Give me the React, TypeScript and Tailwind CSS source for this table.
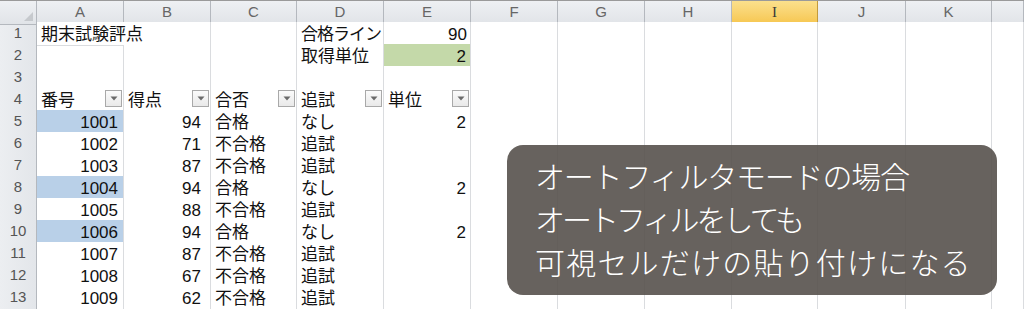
import React from "react";

type Cell = {
  text?: string;
  num?: boolean;
  filter?: boolean;
  bg?: string;
  pr?: string;
  spill?: boolean;
  extra?: string;
};

const columns = ["A", "B", "C", "D", "E", "F", "G", "H", "I", "J", "K", ""];

const fail = (id: string, score: string): Cell[] => [
  { text: id, num: true, pr: "pr-[5px]" },
  { text: score, num: true, pr: "pr-[9px]" },
  { text: "不合格" },
  { text: "追試" },
  {},
];

const pass = (id: string, score: string): Cell[] => [
  { text: id, num: true, pr: "pr-[5px]", bg: "bg-[#b9d0e8]" },
  { text: score, num: true, pr: "pr-[9px]" },
  { text: "合格" },
  { text: "なし" },
  { text: "2", num: true, pr: "pr-[4px]" },
];

const rows: Cell[][] = [
  [
    { text: "期末試験評点", spill: true },
    {},
    {},
    { text: "合格ライン", extra: "tracking-[-1px]" },
    { text: "90", num: true, pr: "pr-[3px]" },
  ],
  [{}, {}, {}, { text: "取得単位" }, { text: "2", num: true, pr: "pr-[4px]", bg: "bg-[#c4d9a9]" }],
  [],
  [
    { text: "番号", filter: true },
    { text: "得点", filter: true },
    { text: "合否", filter: true },
    { text: "追試", filter: true },
    { text: "単位", filter: true },
  ],
  pass("1001", "94"),
  fail("1002", "71"),
  fail("1003", "87"),
  pass("1004", "94"),
  fail("1005", "88"),
  pass("1006", "94"),
  fail("1007", "87"),
  fail("1008", "67"),
  fail("1009", "62"),
];

const gridCols =
  "grid grid-cols-[37px_87px_87px_86px_87px_87px_87px_87px_87px_86px_88px_86px_1fr]";

function FilterButton() {
  return (
    <div className="absolute right-[1px] top-[2px] w-[17px] h-[17px] border border-[#a9a9a9] bg-gradient-to-b from-[#fbfbfb] to-[#e9e9e9] flex items-center justify-center">
      <svg width="8" height="5" viewBox="0 0 8 5">
        <path d="M0.5 0.5 L7.5 0.5 L4 4.5 Z" fill="#6a6a6a" />
      </svg>
    </div>
  );
}

export default function App() {
  return (
    <div
      className="relative w-[1024px] h-[309px] overflow-hidden bg-white"
      style={{ fontFamily: '"Liberation Sans", "Noto Sans CJK JP", sans-serif' }}
    >
      {/* column headers */}
      <div className={`${gridCols} h-[22px] border-t border-[#9a9a9a]`}>
        <div className="relative bg-gradient-to-b from-[#eef0f3] to-[#e1e4e8] border-r border-b border-[#b4b8be]">
          <svg className="absolute right-[3px] bottom-[3px]" width="9" height="9" viewBox="0 0 9 9">
            <path d="M9 0 L9 9 L0 9 Z" fill="#c6c9cd" />
          </svg>
        </div>
        {columns.map((c) =>
          c === "I" ? (
            <div
              key={c}
              className="bg-gradient-to-b from-[#fbe08c] to-[#f6c64e] border-r border-b border-[#c29a3c] flex items-center justify-center text-[15px] text-[#3a3a3a]"
              style={{ fontFamily: '"Liberation Serif", serif' }}
            >
              I
            </div>
          ) : (
            <div
              key={c || "L"}
              className="bg-gradient-to-b from-[#eef0f3] to-[#e1e4e8] border-r border-b border-[#b4b8be] flex items-center justify-center text-[15px] text-[#666]"
            >
              {c}
            </div>
          )
        )}
      </div>

      {/* rows */}
      {rows.map((row, r) => (
        <div key={r} className={`${gridCols} h-[22px]`}>
          <div className="bg-gradient-to-r from-[#eceef1] to-[#e3e6ea] border-r border-b border-[#b4b8be] flex items-center justify-center text-[15px] text-[#555]">
            {r + 1}
          </div>
          {columns.map((_, ci) => {
            const cell = row[ci] ?? {};
            return (
              <div
                key={ci}
                className={`relative border-b border-[#dadcdf] flex items-end pb-[1px] text-[17px] leading-[18px] text-[#111] whitespace-nowrap ${
                  cell.spill ? "z-10 overflow-visible" : "border-r"
                } ${cell.bg ?? "bg-white"} ${
                  cell.num ? `justify-end ${cell.pr ?? "pr-1"}` : "pl-[4px]"
                } ${cell.extra ?? ""}`}
              >
                {cell.text}
                {cell.filter && <FilterButton />}
              </div>
            );
          })}
        </div>
      ))}

      {/* caption overlay */}
      <div
        className="absolute left-[507px] top-[145px] w-[490px] h-[150px] rounded-[16px] bg-[rgba(86,81,76,0.9)] pl-[28px] pt-[9px] text-white text-[30px] leading-[43px] font-light whitespace-nowrap"
        style={{ fontFamily: '"Noto Sans CJK JP", sans-serif' }}
      >
        <div className="tracking-[-1.2px]">オートフィルタモードの場合</div>
        <div className="tracking-[-3px]">オートフィルをしても</div>
        <div className="tracking-[1.2px]">可視セルだけの貼り付けになる</div>
      </div>
    </div>
  );
}
